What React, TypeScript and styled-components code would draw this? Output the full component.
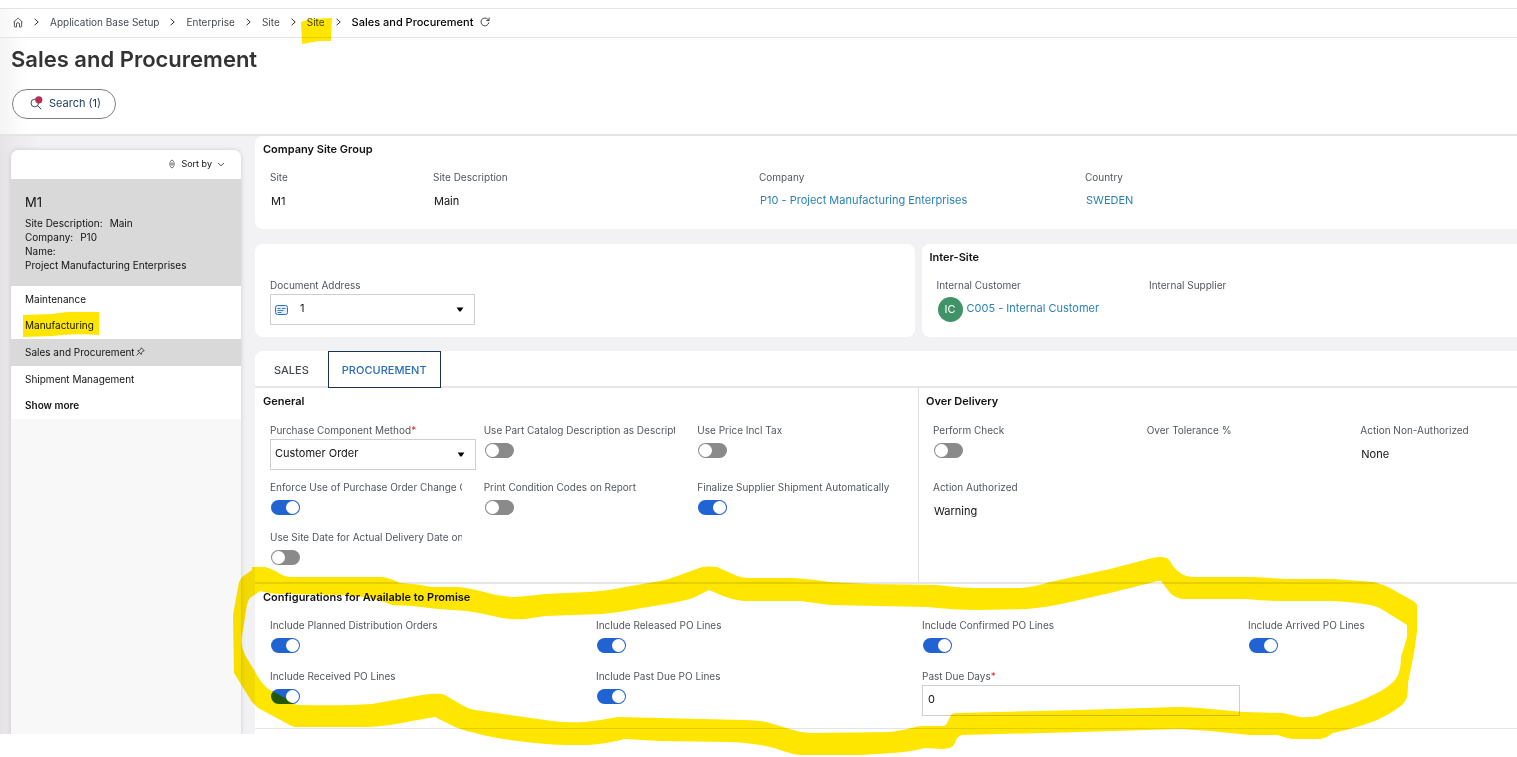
import React, { useId } from "react";
import styled, { createGlobalStyle } from "styled-components";

const GlobalStyle = createGlobalStyle`
  *, *::before, *::after { box-sizing: border-box; }
  body {
    margin: 0;
    background: #fff;
    color: #111;
    font-family: Inter, "Liberation Sans", sans-serif;
    font-size: 10px;
    line-height: 16px;
    overflow-x: hidden;
  }
  button, input, select { font: inherit; color: inherit; margin: 0; }
  h1, h2, p, ul, ol, dl, dd { margin: 0; padding: 0; }
  ul, ol { list-style: none; }
`;

const Page = styled.div`
  position: relative;
  isolation: isolate;
  overflow: hidden;
  min-height: 100vh;
  padding-top: 8px;
  background: #fff;
`;

const Breadcrumbs = styled.nav`
  border-top: 1px solid #e4e4e4;
  border-bottom: 1px solid #e4e4e4;
  height: 30px;
  background: linear-gradient(90deg, #f8f8f8, #fff 24px);
  ol {
    display: flex;
    align-items: center;
    gap: 11px;
    height: 26px;
    padding-left: 13px;
  }
  li { display: flex; align-items: center; gap: 7px; }
  svg { display: block; }
`;

const Crumb = styled.a`
  color: #444a50;
  text-decoration: none;
`;

const CurrentCrumb = styled.span`
  color: #000;
  font-size: 11px;
  font-weight: 500;
`;

const IconButton = styled.button`
  border: 0;
  padding: 0;
  background: none;
`;

const PageHeader = styled.header`
  padding: 6px 11px 15px;
  border-bottom: 2px solid #e4e4e5;
  background: linear-gradient(90deg, #f4f4f5, #fff 28px);
`;

const Title = styled.h1`
  font-size: 22px;
  line-height: 30px;
  font-weight: 600;
  color: #333;
`;

const SearchButton = styled.button`
  display: flex;
  align-items: center;
  gap: 6px;
  height: 30px;
  margin: 15px 0 0 1px;
  padding: 0 14px 2px 17px;
  border: 1px solid #7d8083;
  border-radius: 15px;
  background: #fff;
  color: #1f3d63;
  font-size: 11px;
`;

const Body = styled.div`
  display: flex;
  overflow: hidden;
  padding-left: 11px;
  background: linear-gradient(90deg, #e5e3e5, #ebe9ec 12px, #f2f1f4 40px);
`;

const Sidebar = styled.aside`
  flex: none;
  width: 230px;
  margin: 14px 14px 0 0;
  border-radius: 8px 8px 0 0;
  background: #f8f8f8;
  box-shadow: 0 0 5px rgba(0, 0, 0, 0.16);
  overflow: hidden;
`;

const SortBar = styled.div`
  display: flex;
  justify-content: flex-end;
  height: 29px;
  padding-right: 16px;
  background: #fff;
`;

const SortButton = styled.button`
  display: flex;
  align-items: center;
  gap: 5px;
  border: 0;
  padding: 0 0 1px;
  background: none;
  font-size: 9px;
`;

const RecordCard = styled.section`
  height: 107px;
  padding: 14px;
  background: #d9d9d9;
  line-height: 14px;
  h2 { font-size: 13px; line-height: 18px; font-weight: 400; margin-bottom: 5px; }
  span { margin-left: 7px; }
`;

const SideList = styled.ul`
  display: grid;
  grid-auto-rows: 1fr;
  height: 133px;
  background: #fff;
`;

const SideItem = styled.li<{ $selected?: boolean }>`
  display: flex;
  align-items: center;
  gap: 1px;
  padding: 0 0 1px 14px;
  background: ${(p) => (p.$selected ? "#d9d9d9" : "#fff")};
  a { color: #111; text-decoration: none; }
`;

const MoreButton = styled.button`
  border: 0;
  padding: 0;
  background: none;
  font-weight: 600;
`;

const Main = styled.main`
  flex: 1;
  min-width: 0;
  margin-right: -64px;
`;

const Card = styled.section`
  padding: 4px 7px 12px 8px;
  border-radius: 8px;
  background: #fff;
`;

const CardPair = styled.div`
  display: grid;
  grid-template-columns: 1fr 1fr;
  gap: 7px;
  margin: 15px 0 14px;
`;

const TabCard = styled.div`
  border-radius: 8px 8px 0 0;
  background: #fff;
  padding-bottom: 5px;
`;

const TabList = styled.div`
  display: flex;
  height: 37px;
  box-shadow: inset 0 -2px #e6e6e6;
`;

const Tab = styled.button<{ $active?: boolean }>`
  padding: 0 ${(p) => (p.$active ? 13 : 18)}px;
  border: 1px solid ${(p) => (p.$active ? "#1c3150" : "transparent")};
  background: ${(p) => (p.$active ? "#fff" : "none")};
  color: ${(p) => (p.$active ? "#2a6dbb" : "#444a50")};
  font-size: 11px;
  font-weight: 500;
`;

const SplitRow = styled.div`
  display: grid;
  grid-template-columns: 1fr 1fr;
  border-bottom: 2px solid #e6e6e6;
`;

const Section = styled.section<{ $divided?: boolean; $ruled?: boolean }>`
  padding: 4px 7px 12px ${(p) => (p.$divided ? 7 : 8)}px;
  border-left: ${(p) => (p.$divided ? "1px solid #e0e0e0" : "0")};
  border-bottom: ${(p) => (p.$ruled ? "1px solid #e4e4e4" : "0")};
`;

const Heading = styled.h2<{ $gap?: number }>`
  min-height: 18px;
  margin-bottom: ${(p) => p.$gap ?? 11}px;
  font-size: 11px;
  line-height: 18px;
  font-weight: 600;
  color: #111;
`;

const Fields = styled.div<{ $columns: string; $rowGap?: number }>`
  display: grid;
  grid-template-columns: ${(p) => p.$columns};
  row-gap: ${(p) => p.$rowGap ?? 9}px;
  padding-left: 7px;
`;

const FieldBox = styled.div`
  min-width: 0;
  min-height: 41px;
  padding-right: 8px;
`;

const Label = styled.label`
  display: block;
  height: 16px;
  margin: 0 14px 1px 0;
  overflow: hidden;
  white-space: nowrap;
  color: #50575d;
`;

const Required = styled.span`
  color: #e0312d;
`;

const Value = styled.output`
  display: flex;
  align-items: center;
  gap: 4px;
  height: 31px;
  padding: 0 0 1px 1px;
  font-size: 11px;
`;

const ValueLink = styled.a`
  color: #2a80b5;
  text-decoration: none;
  padding-bottom: 2px;
`;

const Avatar = styled.span`
  display: grid;
  place-items: center;
  width: 25px;
  height: 25px;
  border-radius: 50%;
  background: #3f9367;
  color: #fff;
`;

const Control = styled.div`
  display: flex;
  align-items: center;
  height: 31px;
  padding: 0 10px 0 4px;
  border: 1px solid #cfcfcf;
  background: #fff;
  svg { flex: none; }
`;

const Select = styled.select<{ $indent?: number }>`
  flex: 1;
  min-width: 0;
  margin-left: ${(p) => p.$indent ?? 0}px;
  border: 0;
  padding: 0 0 3px;
  appearance: none;
  background: none;
  font-size: 11px;
`;

const Input = styled.input`
  display: block;
  width: 100%;
  height: 31px;
  padding: 0 5px 3px;
  border: 1px solid #cfcfcf;
  background: #fff;
  font-size: 11px;
`;

const Switch = styled.input.attrs({ type: "checkbox", role: "switch" })`
  appearance: none;
  display: block;
  width: 29px;
  height: 15px;
  margin: 5px 0 0 1px;
  padding: 1px;
  border-radius: 8px;
  background: #8a8a8a;
  &::before {
    content: "";
    display: block;
    width: 13px;
    height: 13px;
    border-radius: 50%;
    background: #fff;
  }
  &:checked { background: #2163d3; }
  &:checked::before { margin-left: auto; }
`;

const Highlighter = styled.svg`
  position: absolute;
  top: 0;
  left: 0;
  fill: #ffe600;
  mix-blend-mode: multiply;
  pointer-events: none;
`;

const Chevron = () => (
  <svg width="5" height="8" viewBox="0 0 5 8" fill="none" stroke="#333" aria-hidden="true">
    <path d="M.6.8 4.2 4 .6 7.2" />
  </svg>
);

const Caret = () => (
  <svg width="8" height="5" viewBox="0 0 8 5" fill="#000" aria-hidden="true">
    <path d="M.6.5h6.8L4.8 4.2Q4 5 3.2 4.2Z" />
  </svg>
);

const HomeIcon = () => (
  <svg width="10" height="11" viewBox="0 0 10 11" fill="none" stroke="#444" strokeWidth=".9" aria-hidden="true">
    <path
      d="M.6 5.2 4.4 1.4q.6-.5 1.2 0L9.4 5.2M1.4 4.6v4.6q0 .8.8.8h1.3V7q0-1.3 1.5-1.3T6.5 7v3h1.3q.8 0 .8-.8V4.6"
      strokeLinejoin="round"
    />
  </svg>
);

const ReloadIcon = () => (
  <svg width="10" height="10" viewBox="0 0 10 10" fill="none" stroke="#333" strokeWidth=".9" aria-hidden="true">
    <path d="M8.8 5.4A3.9 3.9 0 1 1 7.8 2.3L9 3.4M9.1.6v2.9H6.2" />
  </svg>
);

const SearchIcon = () => (
  <svg width="13" height="14" viewBox="0 0 13 14" fill="none" aria-hidden="true">
    <circle cx="4.8" cy="7" r="3.8" stroke="#1f3d63" strokeWidth=".9" />
    <path d="m7.6 9.8 3.6 3.4" stroke="#1f3d63" />
    <circle cx="8.8" cy="3.8" r="3.6" fill="#b8304f" />
  </svg>
);

const SortIcon = () => (
  <svg width="8" height="10" viewBox="0 0 8 10" fill="none" stroke="#444" strokeWidth=".8" aria-hidden="true">
    <path d="M1 4.1h6M1 5.9h6M1.9 2.9 4 .9 6.1 2.9M1.9 7.1 4 9.1 6.1 7.1" />
  </svg>
);

const DownIcon = () => (
  <svg width="8" height="5" viewBox="0 0 8 5" fill="none" stroke="#444" strokeWidth=".9" aria-hidden="true">
    <path d="M1 1 4 3.8 7 1" />
  </svg>
);

const PinIcon = () => (
  <svg width="9" height="9" viewBox="0 0 9 9" fill="none" stroke="#333" strokeWidth=".9" aria-hidden="true">
    <path d="M5.3.8 8.2 3.7 7.2 4 5.6 5.6 5.3 7.4 1.7 3.8 3.4 3.4 5 1.8ZM3.4 5.6.6 8.4" strokeLinejoin="round" />
  </svg>
);

const AddressIcon = () => (
  <svg width="13" height="10" viewBox="0 0 13 10" fill="none" stroke="#2b70c4" aria-hidden="true">
    <rect x=".5" y=".5" width="12" height="9" rx="2" fill="#e3effb" />
    <path d="M2.5 3.5h3M7 3.5h3.5M2.5 5.5h6M2.5 7.5h4" strokeWidth=".9" />
  </svg>
);

type FieldProps = { label: string; required?: boolean; render: (id: string) => React.ReactNode };

function Field({ label, required, render }: FieldProps) {
  const id = useId();
  return (
    <FieldBox>
      <Label htmlFor={id}>
        {label}
        {required && <Required>*</Required>}
      </Label>
      {render(id)}
    </FieldBox>
  );
}

const Toggle = ({ label, on }: { label: string; on?: boolean }) => (
  <Field label={label} render={(id) => <Switch id={id} defaultChecked={on} />} />
);

const TextField = ({ label, children }: { label: string; children?: React.ReactNode }) => (
  <Field label={label} render={(id) => <Value id={id}>{children}</Value>} />
);

const RING =
  "M252 567L265 567Q270 568 277 572Q284 577 292 577L382 577Q390 578 400 583Q418 584 432 587L458 587Q470 588 488 593Q504 597 515 597Q530 596 545 594L588 592Q608 591 625 587L660 581Q670 579 680 575L702 567Q709 566 717 567L737 576Q743 578 750 578L793 578Q812 579 830 582L870 584L937 585Q960 588 977 588L1020 588Q1035 587 1050 582L1110 569L1152 558Q1160 556 1167 558Q1170 560 1173 566Q1180 576 1192 577L1253 577L1287 579L1333 579L1373 582Q1382 584 1390 588L1415 602L1417 605L1417 632L1414 653L1408 683Q1408 693 1407 697Q1406 701 1402 705Q1392 713 1377 720Q1360 727 1333 733Q1328 737 1321 739L1293 739Q1286 738 1277 735L1250 735L1210 731L1180 729L1080 732L962 735Q958 736 956 740Q955 745 950 748L943 749L925 748Q910 752 893 753L860 755L800 755Q791 754 783 751Q772 747 760 745Q742 742 727 742L660 741L625 739Q606 744 588 745L565 745Q540 744 518 741Q492 738 475 733Q465 731 455 727L435 717L412 721Q390 726 368 727L295 727Q292 727 288 724L258 708L252 702L234 673L233 615L239 582L242 577L252 570Z" +
  "M247 605Q248 600 250 598L260 591Q270 594 282 594L345 595Q370 597 384 602L392 605L412 606L438 609L468 611Q485 614 502 618Q514 620 525 619L545 616L602 614Q622 612 642 608L660 605Q680 602 693 598L709 590L723 596Q733 600 743 601L800 601Q815 603 830 605L927 607Q955 610 977 610L1027 609Q1050 607 1070 602L1110 593L1158 581L1161 581L1170 593Q1175 598 1183 599L1247 599Q1265 601 1283 601L1333 601Q1355 602 1370 605Q1377 606 1383 610L1407 625L1407 637L1401 657Q1401 666 1399 672Q1398 677 1393 682Q1386 689 1373 695Q1355 704 1330 711L1317 716Q1308 718 1300 717L1283 713L1243 712L1200 708Q1188 707 1177 707L1080 710L957 713Q952 713 951 715L947 723Q946 726 942 726L920 726Q905 730 890 732L810 733Q802 733 793 730L770 723Q760 720 743 720L660 718L618 717Q602 720 585 722Q568 723 552 721L475 710Q468 709 462 705L443 694Q433 693 422 695L372 704Q345 706 298 705Q292 704 285 698L270 690Q265 687 260 680L245 655Q240 645 242 635Z";

const SITE_MARK = "M301 22 310 19 332 18 331 41 320 41Q312 42 302 44Z";
const MANUFACTURING_MARK = "M23 315 53 314Q63 312 70 312L99 312 99 335Q72 333 53 336L23 337Z";

export default function App() {
  return (
    <Page>
      <GlobalStyle />
      <Breadcrumbs aria-label="Breadcrumb">
        <ol>
          <li><Crumb href="#home" aria-label="Home"><HomeIcon /></Crumb></li>
          {["Application Base Setup", "Enterprise", "Site", "Site"].map((name, i) => (
            <React.Fragment key={i}>
              <li aria-hidden="true"><Chevron /></li>
              <li><Crumb href="#crumb">{name}</Crumb></li>
            </React.Fragment>
          ))}
          <li aria-hidden="true"><Chevron /></li>
          <li>
            <CurrentCrumb aria-current="page">Sales and Procurement</CurrentCrumb>
            <IconButton type="button" aria-label="Reload"><ReloadIcon /></IconButton>
          </li>
        </ol>
      </Breadcrumbs>

      <PageHeader>
        <Title>Sales and Procurement</Title>
        <SearchButton type="button"><SearchIcon />Search (1)</SearchButton>
      </PageHeader>

      <Body>
        <Sidebar>
          <SortBar>
            <SortButton type="button"><SortIcon />Sort by <DownIcon /></SortButton>
          </SortBar>
          <RecordCard>
            <h2>M1</h2>
            <p>Site Description:<span>Main</span></p>
            <p>Company:<span>P10</span></p>
            <p>Name:</p>
            <p>Project Manufacturing Enterprises</p>
          </RecordCard>
          <SideList>
            <SideItem><a href="#maintenance">Maintenance</a></SideItem>
            <SideItem><a href="#manufacturing">Manufacturing</a></SideItem>
            <SideItem $selected><a href="#sales">Sales and Procurement</a><PinIcon /></SideItem>
            <SideItem><a href="#shipment">Shipment Management</a></SideItem>
            <SideItem><MoreButton type="button">Show more</MoreButton></SideItem>
          </SideList>
        </Sidebar>

        <Main>
          <Card>
            <Heading>Company Site Group</Heading>
            <Fields $columns="1fr 2fr 2fr 3fr">
              <TextField label="Site">M1</TextField>
              <TextField label="Site Description">Main</TextField>
              <TextField label="Company">
                <ValueLink href="#company">P10 - Project Manufacturing Enterprises</ValueLink>
              </TextField>
              <TextField label="Country"><ValueLink href="#country">SWEDEN</ValueLink></TextField>
            </Fields>
          </Card>

          <CardPair>
            <Card>
              <Heading as="div" />
              <Fields $columns="repeat(3, 1fr)">
                <Field
                  label="Document Address"
                  render={(id) => (
                    <Control>
                      <AddressIcon />
                      <Select id={id} $indent={12}><option>1</option></Select>
                      <Caret />
                    </Control>
                  )}
                />
              </Fields>
            </Card>
            <Card>
              <Heading>Inter-Site</Heading>
              <Fields $columns="repeat(3, 1fr)">
                <TextField label="Internal Customer">
                  <Avatar>IC</Avatar>
                  <ValueLink href="#customer">C005 - Internal Customer</ValueLink>
                </TextField>
                <TextField label="Internal Supplier" />
              </Fields>
            </Card>
          </CardPair>

          <TabCard>
            <TabList role="tablist">
              <Tab type="button" role="tab" aria-selected="false">SALES</Tab>
              <Tab type="button" role="tab" aria-selected="true" $active>PROCUREMENT</Tab>
            </TabList>
            <SplitRow>
              <Section>
                <Heading $gap={12}>General</Heading>
                <Fields $columns="repeat(3, 1fr)">
                  <Field
                    label="Purchase Component Method"
                    required
                    render={(id) => (
                      <Control>
                        <Select id={id}><option>Customer Order</option></Select>
                        <Caret />
                      </Control>
                    )}
                  />
                  <Toggle label="Use Part Catalog Description as Description" />
                  <Toggle label="Use Price Incl Tax" />
                  <Toggle label="Enforce Use of Purchase Order Change Order" on />
                  <Toggle label="Print Condition Codes on Report" />
                  <Toggle label="Finalize Supplier Shipment Automatically" on />
                  <Toggle label="Use Site Date for Actual Delivery Date on" />
                </Fields>
              </Section>
              <Section $divided>
                <Heading $gap={12}>Over Delivery</Heading>
                <Fields $columns="repeat(3, 1fr)">
                  <Toggle label="Perform Check" />
                  <TextField label="Over Tolerance %" />
                  <TextField label="Action Non-Authorized">None</TextField>
                  <TextField label="Action Authorized">Warning</TextField>
                </Fields>
              </Section>
            </SplitRow>
            <Section $ruled>
              <Heading>Configurations for Available to Promise</Heading>
              <Fields $columns="repeat(4, 1fr)" $rowGap={10}>
                <Toggle label="Include Planned Distribution Orders" on />
                <Toggle label="Include Released PO Lines" on />
                <Toggle label="Include Confirmed PO Lines" on />
                <Toggle label="Include Arrived PO Lines" on />
                <Toggle label="Include Received PO Lines" on />
                <Toggle label="Include Past Due PO Lines" on />
                <Field label="Past Due Days" required render={(id) => <Input id={id} defaultValue="0" />} />
              </Fields>
            </Section>
          </TabCard>
        </Main>
      </Body>

      <Highlighter width="1517" height="757" viewBox="0 0 1517 757" aria-hidden="true">
        <path d={RING} fillRule="evenodd" />
        <path d={SITE_MARK} />
        <path d={MANUFACTURING_MARK} />
      </Highlighter>
    </Page>
  );
}
